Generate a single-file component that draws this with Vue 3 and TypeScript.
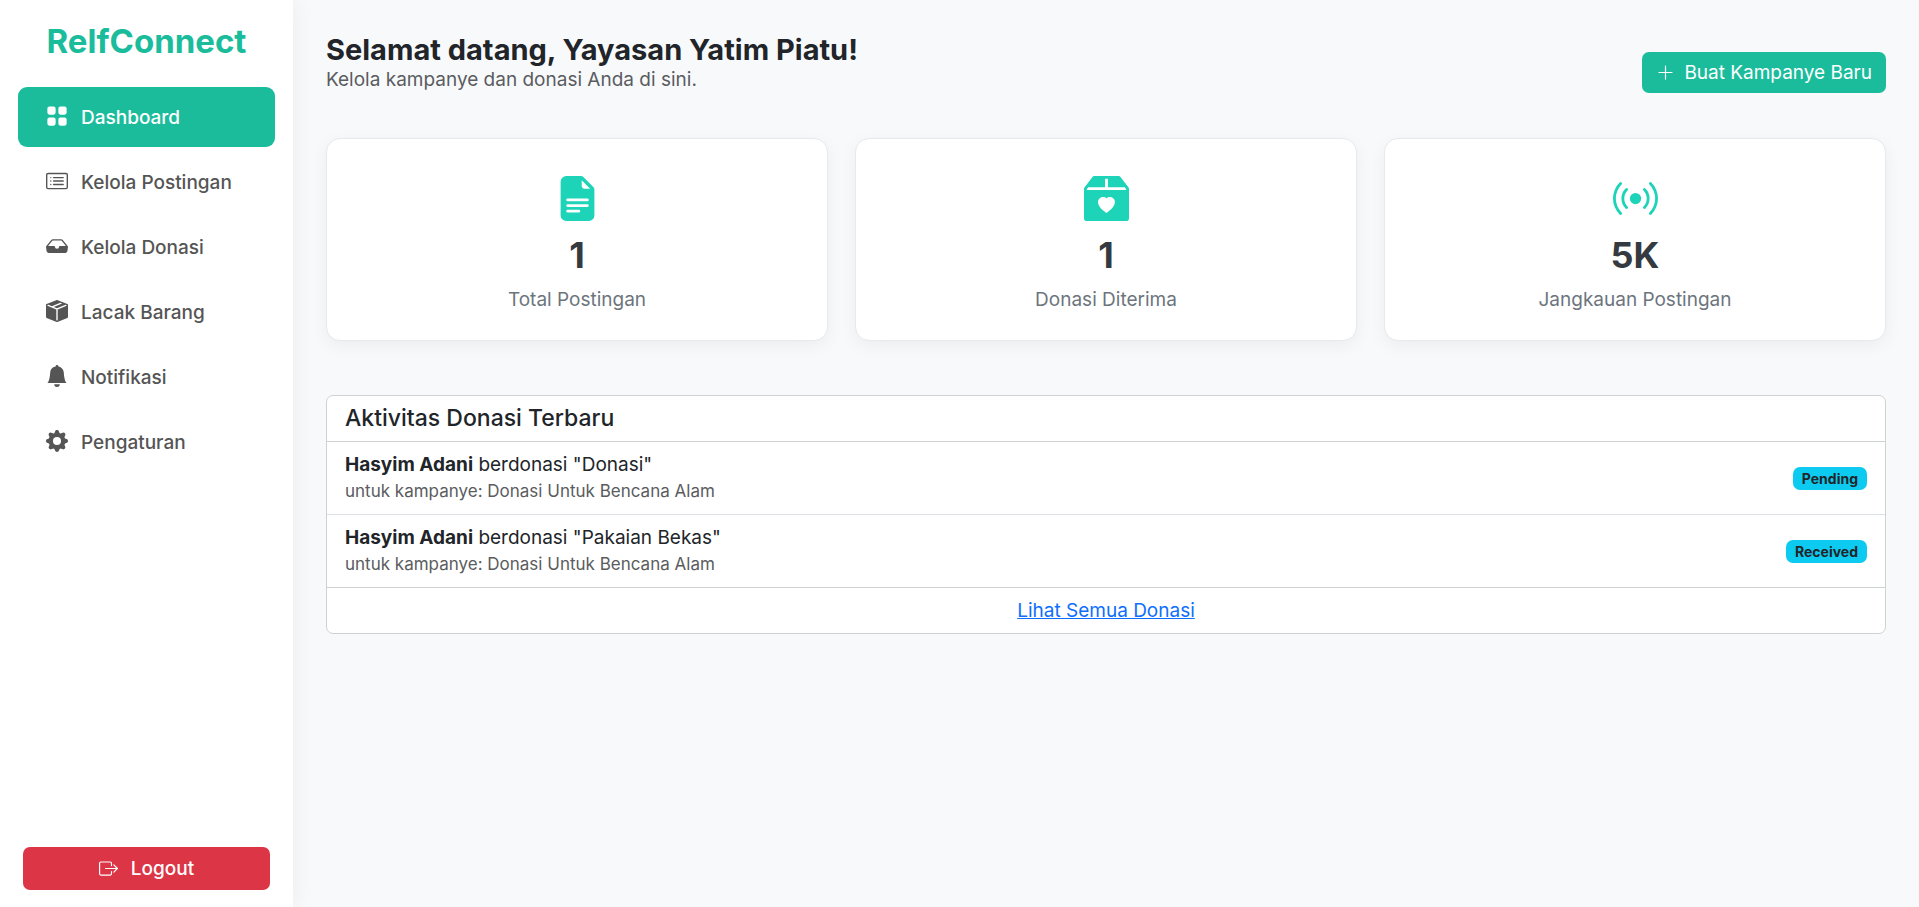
<script setup lang="ts">
interface NavItem {
  label: string
  paths: string[]
  active?: boolean
}

interface Stat {
  value: string
  label: string
  path: string
}

interface Donation {
  id: number
  donor: string
  item: string
  campaign: string
  status: string
}

const navItems: NavItem[] = [
  {
    label: 'Dashboard',
    active: true,
    paths: [
      'M1 2.5A1.5 1.5 0 0 1 2.5 1h3A1.5 1.5 0 0 1 7 2.5v3A1.5 1.5 0 0 1 5.5 7h-3A1.5 1.5 0 0 1 1 5.5zm8 0A1.5 1.5 0 0 1 10.5 1h3A1.5 1.5 0 0 1 15 2.5v3A1.5 1.5 0 0 1 13.5 7h-3A1.5 1.5 0 0 1 9 5.5zm-8 8A1.5 1.5 0 0 1 2.5 9h3A1.5 1.5 0 0 1 7 10.5v3A1.5 1.5 0 0 1 5.5 15h-3A1.5 1.5 0 0 1 1 13.5zm8 0A1.5 1.5 0 0 1 10.5 9h3a1.5 1.5 0 0 1 1.5 1.5v3a1.5 1.5 0 0 1-1.5 1.5h-3A1.5 1.5 0 0 1 9 13.5z',
    ],
  },
  {
    label: 'Kelola Postingan',
    paths: [
      'M14.5 3a.5.5 0 0 1 .5.5v9a.5.5 0 0 1-.5.5h-13a.5.5 0 0 1-.5-.5v-9a.5.5 0 0 1 .5-.5zm-13-1A1.5 1.5 0 0 0 0 3.5v9A1.5 1.5 0 0 0 1.5 14h13a1.5 1.5 0 0 0 1.5-1.5v-9A1.5 1.5 0 0 0 14.5 2z',
      'M5 8a.5.5 0 0 1 .5-.5h7a.5.5 0 0 1 0 1h-7A.5.5 0 0 1 5 8m0-2.5a.5.5 0 0 1 .5-.5h7a.5.5 0 0 1 0 1h-7a.5.5 0 0 1-.5-.5m0 5a.5.5 0 0 1 .5-.5h7a.5.5 0 0 1 0 1h-7a.5.5 0 0 1-.5-.5m-1-5a.5.5 0 1 1-1 0 .5.5 0 0 1 1 0M4 8a.5.5 0 1 1-1 0 .5.5 0 0 1 1 0m0 2.5a.5.5 0 1 1-1 0 .5.5 0 0 1 1 0',
    ],
  },
  {
    label: 'Kelola Donasi',
    paths: [
      'M4.98 4a.5.5 0 0 0-.39.188L1.54 8H6a.5.5 0 0 1 .5.5 1.5 1.5 0 1 0 3 0A.5.5 0 0 1 10 8h4.46l-3.05-3.812A.5.5 0 0 0 11.02 4zm-1.17-.437A1.5 1.5 0 0 1 4.98 3h6.04a1.5 1.5 0 0 1 1.17.563l3.7 4.625a.5.5 0 0 1 .106.374l-.39 3.124A1.5 1.5 0 0 1 14.117 13H1.883a1.5 1.5 0 0 1-1.489-1.314l-.39-3.124a.5.5 0 0 1 .106-.374z',
    ],
  },
  {
    label: 'Lacak Barang',
    paths: [
      'M15.528 2.973a.75.75 0 0 1 .472.696v8.662a.75.75 0 0 1-.472.696l-7.25 2.9a.75.75 0 0 1-.557 0l-7.25-2.9A.75.75 0 0 1 0 12.331V3.669a.75.75 0 0 1 .471-.696L7.443.184l.01-.003.268-.108a.75.75 0 0 1 .558 0l.269.108.01.003zM10.404 2 4.25 4.461 1.846 3.5 1 3.839v.4l6.5 2.6v7.922l.5.2.5-.2V6.84l6.5-2.6v-.4l-.846-.339L8 5.961 5.596 5l6.154-2.461z',
    ],
  },
  {
    label: 'Notifikasi',
    paths: [
      'M8 16a2 2 0 0 0 2-2H6a2 2 0 0 0 2 2m.995-14.901a1 1 0 1 0-1.99 0A5 5 0 0 0 3 6c0 1.098-.5 6-2 7h14c-1.5-1-2-5.902-2-7 0-2.42-1.72-4.44-4.005-4.901',
    ],
  },
  {
    label: 'Pengaturan',
    paths: [
      'M9.405 1.05c-.413-1.4-2.397-1.4-2.81 0l-.1.34a1.464 1.464 0 0 1-2.105.872l-.31-.17c-1.283-.698-2.686.705-1.987 1.987l.169.311c.446.82.023 1.841-.872 2.105l-.34.1c-1.4.413-1.4 2.397 0 2.81l.34.1a1.464 1.464 0 0 1 .872 2.105l-.17.31c-.698 1.283.705 2.686 1.987 1.987l.311-.169a1.464 1.464 0 0 1 2.105.872l.1.34c.413 1.4 2.397 1.4 2.81 0l.1-.34a1.464 1.464 0 0 1 2.105-.872l.31.17c1.283.698 2.686-.705 1.987-1.987l-.169-.311a1.464 1.464 0 0 1 .872-2.105l.34-.1c1.4-.413 1.4-2.397 0-2.81l-.34-.1a1.464 1.464 0 0 1-.872-2.105l.17-.31c.698-1.283-.705-2.686-1.987-1.987l-.311.169a1.464 1.464 0 0 1-2.105-.872zM8 10.93a2.929 2.929 0 1 1 0-5.86 2.929 2.929 0 0 1 0 5.858z',
    ],
  },
]

const stats: Stat[] = [
  {
    value: '1',
    label: 'Total Postingan',
    path: 'M9.293 0H4a2 2 0 0 0-2 2v12a2 2 0 0 0 2 2h8a2 2 0 0 0 2-2V4.707A1 1 0 0 0 13.707 4L10 .293A1 1 0 0 0 9.293 0M9.5 3.5v-2l3 3h-2a1 1 0 0 1-1-1M4.5 9a.5.5 0 0 1 0-1h7a.5.5 0 0 1 0 1zM4 10.5a.5.5 0 0 1 .5-.5h7a.5.5 0 0 1 0 1h-7a.5.5 0 0 1-.5-.5m.5 2.5a.5.5 0 0 1 0-1h4a.5.5 0 0 1 0 1z',
  },
  {
    value: '1',
    label: 'Donasi Diterima',
    path: 'M3.75 0a1 1 0 0 0-.8.4L.1 4.2a.5.5 0 0 0-.1.3V15a1 1 0 0 0 1 1h14a1 1 0 0 0 1-1V4.5a.5.5 0 0 0-.1-.3L13.05.4a1 1 0 0 0-.8-.4zM8.5 4h6l.5.667V5H1v-.333L1.5 4h6V1h1zM8 7.993c1.664-1.711 5.825 1.283 0 5.132-5.825-3.85-1.664-6.843 0-5.132',
  },
  {
    value: '5K',
    label: 'Jangkauan Postingan',
    path: 'M3.05 3.05a7 7 0 0 0 0 9.9.5.5 0 0 1-.707.707 8 8 0 0 1 0-11.314.5.5 0 0 1 .707.707m2.122 2.122a4 4 0 0 0 0 5.656.5.5 0 1 1-.708.708 5 5 0 0 1 0-7.072.5.5 0 0 1 .708.708m5.656-.708a.5.5 0 0 1 .708 0 5 5 0 0 1 0 7.072.5.5 0 1 1-.708-.708 4 4 0 0 0 0-5.656.5.5 0 0 1 0-.708m2.122-2.12a.5.5 0 0 1 .707 0 8 8 0 0 1 0 11.313.5.5 0 0 1-.707-.707 7 7 0 0 0 0-9.9.5.5 0 0 1 0-.707zM10 8a2 2 0 1 1-4 0 2 2 0 0 1 4 0',
  },
]

const donations: Donation[] = [
  { id: 1, donor: 'Hasyim Adani', item: 'Donasi', campaign: 'Donasi Untuk Bencana Alam', status: 'Pending' },
  { id: 2, donor: 'Hasyim Adani', item: 'Pakaian Bekas', campaign: 'Donasi Untuk Bencana Alam', status: 'Received' },
]
</script>

<template>
  <div class="layout">
    <aside class="sidebar">
      <div class="brand">RelfConnect</div>
      <nav class="nav">
        <a
          v-for="item in navItems"
          :key="item.label"
          href="#"
          class="nav-link"
          :class="{ active: item.active }"
          :aria-current="item.active ? 'page' : undefined"
        >
          <svg class="nav-icon" viewBox="0 0 16 16" aria-hidden="true">
            <path v-for="d in item.paths" :key="d" :d="d" />
          </svg>
          <span>{{ item.label }}</span>
        </a>
      </nav>
      <button type="button" class="logout">
        <svg class="button-icon" viewBox="0 0 16 16" aria-hidden="true">
          <path fill-rule="evenodd" d="M10 12.5a.5.5 0 0 1-.5.5h-8a.5.5 0 0 1-.5-.5v-9a.5.5 0 0 1 .5-.5h8a.5.5 0 0 1 .5.5v2a.5.5 0 0 0 1 0v-2A1.5 1.5 0 0 0 9.5 2h-8A1.5 1.5 0 0 0 0 3.5v9A1.5 1.5 0 0 0 1.5 14h8a1.5 1.5 0 0 0 1.5-1.5v-2a.5.5 0 0 0-1 0z" />
          <path fill-rule="evenodd" d="M15.854 8.354a.5.5 0 0 0 0-.708l-3-3a.5.5 0 0 0-.708.708L14.293 7.5H5.5a.5.5 0 0 0 0 1h8.793l-2.147 2.146a.5.5 0 0 0 .708.708z" />
        </svg>
        <span>Logout</span>
      </button>
    </aside>

    <main class="main">
      <header class="page-header">
        <div>
          <h1 class="title">Selamat datang, Yayasan Yatim Piatu!</h1>
          <p class="subtitle">Kelola kampanye dan donasi Anda di sini.</p>
        </div>
        <button type="button" class="create">
          <svg class="button-icon" viewBox="0 0 16 16" aria-hidden="true">
            <path fill-rule="evenodd" d="M8 2a.5.5 0 0 1 .5.5v5h5a.5.5 0 0 1 0 1h-5v5a.5.5 0 0 1-1 0v-5h-5a.5.5 0 0 1 0-1h5v-5A.5.5 0 0 1 8 2" />
          </svg>
          <span>Buat Kampanye Baru</span>
        </button>
      </header>

      <section class="stats">
        <article v-for="stat in stats" :key="stat.label" class="stat">
          <svg class="stat-icon" viewBox="0 0 16 16" aria-hidden="true">
            <path :d="stat.path" />
          </svg>
          <strong class="stat-value">{{ stat.value }}</strong>
          <span class="stat-label">{{ stat.label }}</span>
        </article>
      </section>

      <section class="activity">
        <h2 class="activity-title">Aktivitas Donasi Terbaru</h2>
        <ul class="donations">
          <li v-for="donation in donations" :key="donation.id" class="donation">
            <div>
              <div class="donation-line"><strong>{{ donation.donor }}</strong> berdonasi "{{ donation.item }}"</div>
              <div class="donation-campaign">untuk kampanye: {{ donation.campaign }}</div>
            </div>
            <span class="badge">{{ donation.status }}</span>
          </li>
        </ul>
        <footer class="activity-footer">
          <a href="#">Lihat Semua Donasi</a>
        </footer>
      </section>
    </main>
  </div>
</template>

<style>
body {
  margin: 0;
  background: #f8f9fb;
}
</style>

<style scoped>
.layout {
  display: flex;
  min-height: 100vh;
  color: #212529;
  font-family: Inter, "Open Sans", sans-serif;
  font-size: 19px;
  line-height: 27px;
}

.layout *,
.layout *::before {
  box-sizing: border-box;
}

.sidebar {
  display: flex;
  flex: 0 0 293px;
  flex-direction: column;
  padding: 18px 18px 17px;
  background: #fff;
  box-shadow: 0 0 22px rgba(0, 0, 0, 0.06);
}

.brand {
  margin-bottom: 22px;
  color: #1abc9c;
  font-size: 33px;
  font-weight: 700;
  line-height: 47px;
  text-align: center;
}

.nav {
  display: flex;
  flex-direction: column;
  gap: 5px;
}

.nav-link {
  display: flex;
  align-items: center;
  height: 60px;
  padding: 0 28px;
  border-radius: 9px;
  color: #555;
  font-weight: 500;
  text-decoration: none;
}

.nav-link.active {
  background: #1abc9c;
  color: #fff;
}

.nav-icon {
  width: 22px;
  height: 22px;
  margin: 0 13px 3px 0;
  fill: currentColor;
}

.logout,
.create {
  display: flex;
  align-items: center;
  justify-content: center;
  border: 0;
  border-radius: 7px;
  color: #fff;
  font: inherit;
  cursor: pointer;
}

.logout {
  gap: 13px;
  height: 43px;
  margin: auto 5px 0;
  background: #dc3545;
  font-weight: 500;
}

.create {
  gap: 9px;
  height: 41px;
  margin-top: 19px;
  padding: 0 14px;
  background: #1abc9c;
}

.button-icon {
  width: 19px;
  height: 19px;
  fill: currentColor;
}

.main {
  flex: 1;
  min-width: 0;
  padding: 33px;
}

.page-header {
  display: flex;
  align-items: center;
  justify-content: space-between;
  margin-bottom: 45px;
}

.title {
  margin: 0;
  font-size: 29px;
  font-weight: 700;
  line-height: 33px;
}

.subtitle {
  margin: 0;
  color: #5a5c60;
}

.stats {
  display: grid;
  grid-template-columns: repeat(3, 1fr);
  gap: 27px;
  margin-bottom: 54px;
}

.stat {
  display: flex;
  flex-direction: column;
  align-items: center;
  padding: 37px 27px 27px;
  border: 1px solid #e6e9ed;
  border-radius: 14px;
  background: #fff;
  box-shadow: 0 5px 17px rgba(0, 0, 0, 0.05);
}

.stat-icon {
  width: 45px;
  height: 45px;
  fill: #1dd3b8;
}

.stat-value {
  margin: 13px 0 9px;
  color: #343a40;
  font-size: 36px;
  font-weight: 700;
  line-height: 43px;
}

.stat-label {
  color: #6c757d;
}

.activity {
  border: 1px solid #cfd1d3;
  border-radius: 7px;
  background: #fff;
}

.activity-title {
  margin: 0;
  padding: 9px 18px;
  border-bottom: 1px solid #cfd1d3;
  font-size: 23px;
  font-weight: 500;
  line-height: 27px;
}

.donations {
  margin: 0;
  padding: 0;
  list-style: none;
}

.donation {
  display: flex;
  align-items: center;
  justify-content: space-between;
  padding: 9px 18px;
}

.donation + .donation {
  border-top: 1px solid #dee2e6;
}

.donation-campaign {
  color: #5a5c60;
  font-size: 17px;
}

.badge {
  padding: 0 9px;
  border-radius: 7px;
  background: #0dcaf0;
  font-size: 14px;
  font-weight: 700;
  line-height: 23px;
}

.activity-footer {
  padding: 9px 18px;
  border-top: 1px solid #cfd1d3;
  text-align: center;
}

.activity-footer a {
  color: #0d6efd;
}
</style>
